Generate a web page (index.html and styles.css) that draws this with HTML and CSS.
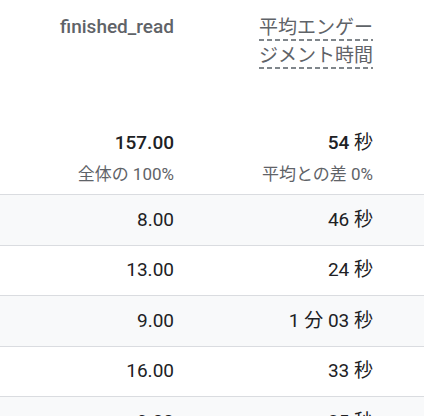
FILE: index.html
```html
<!DOCTYPE html>
<html lang="ja">
<head>
<meta charset="utf-8">
<link rel="stylesheet" href="styles.css">
</head>
<body>
<div class="table">
  <div class="row head">
    <div class="cell"><span class="metric">finished_read</span></div>
    <div class="cell">
      <div class="dashed">
        <span class="dline">平均エンゲー</span>
        <span class="dline">ジメント時間</span>
      </div>
    </div>
  </div>
  <div class="row summary">
    <div class="cell">
      <div class="total">157.00</div>
      <div class="sub">全体の 100%</div>
    </div>
    <div class="cell">
      <div class="total">54 <span class="unit">秒</span></div>
      <div class="sub">平均との差 0%</div>
    </div>
  </div>
  <div class="row data alt">
    <div class="cell">8.00</div>
    <div class="cell">46 秒</div>
  </div>
  <div class="row data">
    <div class="cell">13.00</div>
    <div class="cell">24 秒</div>
  </div>
  <div class="row data alt">
    <div class="cell">9.00</div>
    <div class="cell">1 分 03 秒</div>
  </div>
  <div class="row data">
    <div class="cell">16.00</div>
    <div class="cell">33 秒</div>
  </div>
  <div class="row data alt">
    <div class="cell">9.00</div>
    <div class="cell">25 秒</div>
  </div>
</div>
</body>
</html>
```

FILE: styles.css
```css
html, body {
  margin: 0;
  padding: 0;
  background: #ffffff;
}
body {
  font-family: Roboto, "Noto Sans CJK JP", sans-serif;
  color: #202124;
  width: 424px;
  height: 416px;
  overflow: hidden;
}
.table {
  display: flex;
  flex-direction: column;
}
.row {
  display: grid;
  grid-template-columns: 198px 199px;
}
.cell {
  padding-right: 24px;
  text-align: right;
}
.head {
  height: 120px;
  box-sizing: border-box;
  padding-top: 15px;
  color: #5f6368;
}
.metric {
  display: inline-block;
  font-size: 19px;
  font-weight: 500;
  line-height: 22px;
  padding-top: 1px;
}
.dashed {
  display: flex;
  flex-direction: column;
  align-items: flex-end;
}
.dline {
  font-family: "Noto Sans CJK JP", sans-serif;
  font-size: 19px;
  line-height: 22px;
  padding-bottom: 4px;
  margin-bottom: 1.5px;
  background-image: linear-gradient(to right, #80868b 0, #80868b 5px, transparent 5px, transparent 8px);
  background-size: 8px 2px;
  background-repeat: repeat-x;
  background-position: left bottom;
}
.summary {
  height: 75px;
  box-sizing: border-box;
  padding-top: 11px;
  border-bottom: 1px solid #dadce0;
}
.total {
  font-size: 19px;
  font-weight: 500;
  line-height: 24px;
  color: #202124;
}
.unit {
  font-weight: 400;
}
.sub {
  margin-top: 9px;
  font-size: 17px;
  line-height: 20px;
  color: #5f6368;
}
.data {
  height: 50.5px;
  box-sizing: border-box;
  border-bottom: 1px solid #dadce0;
  align-items: center;
  font-size: 19px;
  line-height: 24px;
}
.alt {
  background: #f8f9fa;
}
```
